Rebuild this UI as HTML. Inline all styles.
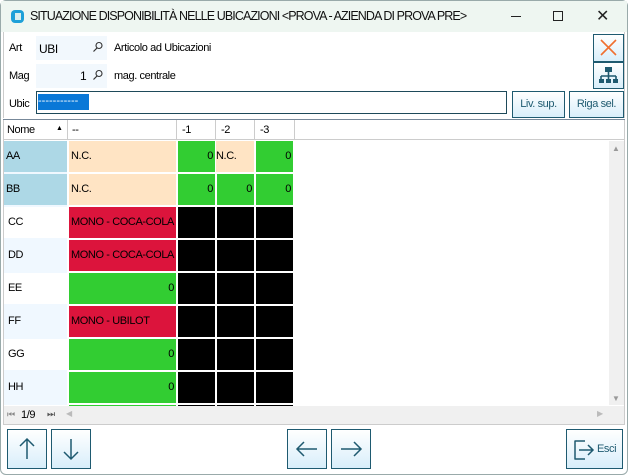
<!DOCTYPE html>
<html><head><meta charset="utf-8"><style>
*{box-sizing:border-box;margin:0;padding:0}
body{width:628px;height:475px;background:#fff;font-family:"Liberation Sans",sans-serif;font-size:11px;letter-spacing:-0.4px;color:#000;position:relative;overflow:hidden}
.a{position:absolute}
.btn{position:absolute;border:1px solid #1e5a70;background:linear-gradient(#fff,#d8eefa);}
.c{position:absolute;height:31px;line-height:31px;font-size:11px;padding:0 2px;white-space:nowrap;overflow:hidden}
.bl{background:#000}.gr{background:#32cd32;text-align:right}.pe{background:#ffe4c4}.rd{background:#dc143c}.lb{background:#add8e6}
.mg{position:absolute;width:12px;height:12px}
</style></head><body>
<div class="a" style="left:0;top:0;width:628px;height:475px;border:1px solid #9aa;border-radius:6px"></div>
<div class="a" style="left:1px;top:1px;width:626px;height:31px;background:#eef6f1"></div>
<svg class="a" style="left:10px;top:9px" width="15" height="15"><rect x="1" y="1" width="13" height="13" rx="4" fill="#1ea0d8"/><path d="M5 4h6v7h-6z" fill="#eef6f1" opacity=".9"/></svg>
<div class="a" style="left:30px;top:9px;font-size:12.5px;letter-spacing:-0.9px;color:#111">SITUAZIONE DISPONIBILITÀ NELLE UBICAZIONI &lt;PROVA - AZIENDA DI PROVA PRE&gt;</div>
<div class="a" style="left:511px;top:16px;width:10px;height:1px;background:#222"></div>
<div class="a" style="left:553px;top:11px;width:10px;height:10px;border:1px solid #222"></div>
<div class="a" style="left:596px;top:6px;font-size:16px;color:#222">✕</div>
<div class="a" style="left:3px;top:32px;width:622px;height:86px;background:#fff;border-left:1px solid #ccc;border-right:1px solid #ccc"></div>
<div class="a" style="left:9px;top:42px">Art</div>
<div class="a" style="left:36px;top:36px;width:71px;height:24px;background:#f2f8fd"></div>
<div class="a" style="left:39px;top:42px;font-size:12px">UBI</div>
<svg class="mg" style="left:92px;top:41px"><circle cx="7" cy="4.5" r="3" fill="none" stroke="#333" stroke-width="1.1"/><path d="M5 7l-3.5 3.5" stroke="#333" stroke-width="1.2"/></svg>
<div class="a" style="left:95px;top:42px"></div>
<div class="a" style="left:95px;top:42px;left:95px"></div>
<div class="a" style="left:95px;top:42px;left:95px"></div>
<div class="a" style="left:95px;top:42px"></div>
<div class="a" style="left:95px;top:42px"></div>
<div class="a" style="left:95px;top:42px"></div>
<div class="a" style="left:95px;top:42px"></div>
<div class="a" style="left:95px;top:42px"></div>
<div class="a" style="left:95px;top:42px"></div>
<div class="a" style="left:95px;top:42px"></div>
<div class="a" style="left:95px;top:42px"></div>
<div class="a" style="left:95px;top:42px"></div>
<div class="a" style="left:95px;top:42px"></div>
<div class="a" style="left:95px;top:42px"></div>
<div class="a" style="left:95px;top:42px"></div>
<div class="a" style="left:95px;top:42px"></div>
<div class="a" style="left:95px;top:42px"></div>
<div class="a" style="left:95px;top:42px"></div>
<div class="a" style="left:95px;top:42px"></div>
<div class="a" style="left:95px;top:42px"></div>
<div class="a" style="left:95px;top:42px"></div>
<div class="a" style="left:95px;top:42px"></div>
<div class="a" style="left:95px;top:42px"></div>
<div class="a" style="left:95px;top:42px"></div>
<div class="a" style="left:95px;top:42px"></div>
<div class="a" style="left:95px;top:42px"></div>
<div class="a" style="left:95px;top:42px"></div>
<div class="a" style="left:95px;top:42px"></div>
<div class="a" style="left:95px;top:42px"></div>
<div class="a" style="left:95px;top:42px"></div>
<div class="a" style="left:95px;top:42px"></div>
<div class="a" style="left:95px;top:42px"></div>
<div class="a" style="left:95px;top:42px"></div>
<div class="a" style="left:95px;top:42px"></div>
<div class="a" style="left:95px;top:42px"></div>
<div class="a" style="left:95px;top:42px"></div>
<div class="a" style="left:95px;top:42px"></div>
<div class="a" style="left:95px;top:42px"></div>
<div class="a" style="left:95px;top:42px"></div>
<div class="a" style="left:95px;top:42px"></div>
<div class="a" style="left:95px;top:42px"></div>
<div class="a" style="left:95px;top:42px"></div>
<div class="a" style="left:95px;top:42px"></div>
<div class="a" style="left:95px;top:42px"></div>
<div class="a" style="left:95px;top:42px"></div>
<div class="a" style="left:95px;top:42px"></div>
<div class="a" style="left:95px;top:42px"></div>
<div class="a" style="left:95px;top:42px"></div>
<div class="a" style="left:95px;top:42px"></div>
<div class="a" style="left:95px;top:42px"></div>
<div class="a" style="left:95px;top:42px"></div>
<div class="a" style="left:95px;top:42px"></div>
<div class="a" style="left:95px;top:42px"></div>
<div class="a" style="left:95px;top:42px"></div>
<div class="a" style="left:95px;top:42px"></div>
<div class="a" style="left:95px;top:42px"></div>
<div class="a" style="left:95px;top:42px"></div>
<div class="a" style="left:95px;top:42px"></div>
<div class="a" style="left:95px;top:42px"></div>
<div class="a" style="left:95px;top:42px"></div>
<div class="a" style="left:95px;top:42px"></div>
<div class="a" style="left:95px;top:42px"></div>
<div class="a" style="left:95px;top:42px"></div>
<div class="a" style="left:95px;top:42px"></div>
<div class="a" style="left:95px;top:42px"></div>
<div class="a" style="left:95px;top:42px"></div>
<div class="a" style="left:95px;top:42px"></div>
<div class="a" style="left:95px;top:42px"></div>
<div class="a" style="left:95px;top:42px"></div>
<div class="a" style="left:95px;top:42px"></div>
<div class="a" style="left:95px;top:42px"></div>
<div class="a" style="left:95px;top:42px"></div>
<div class="a" style="left:95px;top:42px"></div>
<div class="a" style="left:95px;top:42px"></div>
<div class="a" style="left:95px;top:42px"></div>
<div class="a" style="left:95px;top:42px"></div>
<div class="a" style="left:95px;top:42px"></div>
<div class="a" style="left:95px;top:42px"></div>
<div class="a" style="left:95px;top:42px"></div>
<div class="a" style="left:95px;top:42px"></div>
<div class="a" style="left:95px;top:42px"></div>
<div class="a" style="left:95px;top:42px"></div>
<div class="a" style="left:95px;top:42px"></div>
<div class="a" style="left:95px;top:42px"></div>
<div class="a" style="left:95px;top:42px"></div>
<div class="a" style="left:95px;top:42px"></div>
<div class="a" style="left:114px;top:42px">Articolo ad Ubicazioni</div>
<div class="a" style="left:9px;top:70px">Mag</div>
<div class="a" style="left:36px;top:64px;width:71px;height:24px;background:#f2f8fd"></div>
<div class="a" style="left:80px;top:69px;font-size:12px">1</div>
<svg class="mg" style="left:92px;top:69px"><circle cx="7" cy="4.5" r="3" fill="none" stroke="#333" stroke-width="1.1"/><path d="M5 7l-3.5 3.5" stroke="#333" stroke-width="1.2"/></svg>
<div class="a" style="left:114px;top:70px">mag. centrale</div>
<div class="a" style="left:9px;top:98px">Ubic</div>
<div class="a" style="left:36px;top:91px;width:471px;height:23px;border:1px solid #1e4a5a"></div>
<div class="a" style="left:38px;top:94px;width:51px;height:16px;background:#0a78d7;color:#fff;line-height:14px;font-size:11px;letter-spacing:0;overflow:hidden">-----------</div>
<div class="btn" style="left:512px;top:91px;width:53px;height:27px;color:#1e5a70;text-align:center;line-height:25px">Liv. sup.</div>
<div class="btn" style="left:569px;top:91px;width:55px;height:27px;color:#1e5a70;text-align:center;line-height:25px">Riga sel.</div>
<div class="btn" style="left:593px;top:34px;width:31px;height:28px"><svg width="29" height="26"><path d="M7 5l15 15M22 5L7 20" stroke="#f07030" stroke-width="1.6"/></svg></div>
<div class="btn" style="left:593px;top:62px;width:31px;height:27px"><svg width="29" height="25"><rect x="11" y="4" width="7" height="5" fill="#1e5a70"/><path d="M14.5 9v4M7 13h15M7 13v4M14.5 13v4M22 13v4" stroke="#1e5a70" stroke-width="1.6"/><rect x="5" y="16" width="5" height="4" fill="#1e5a70"/><rect x="12" y="16" width="5" height="4" fill="#1e5a70"/><rect x="19" y="16" width="5" height="4" fill="#1e5a70"/></svg></div>
<!-- grid -->
<div class="a" style="left:3px;top:119px;width:622px;height:1px;background:#789"></div>
<div class="a" style="left:3px;top:120px;width:291px;height:20px;background:#fff;border-bottom:1px solid #ccc"></div>
<div class="a" style="left:3px;top:120px;width:622px;height:305px;border-left:1px solid #ccc;border-right:1px solid #ccc"></div>
<div class="a" style="left:294px;top:120px;width:330px;height:20px;border-bottom:1px solid #ccc;border-left:1px solid #ccc"></div>
<div class="a" style="left:7px;top:124px">Nome</div><div class="a" style="left:56px;top:125px;font-size:7px">▲</div>
<div class="a" style="left:67px;top:120px;width:1px;height:20px;background:#ccc"></div>
<div class="a" style="left:72px;top:124px">--</div>
<div class="a" style="left:176px;top:120px;width:1px;height:20px;background:#ccc"></div>
<div class="a" style="left:182px;top:124px">-1</div>
<div class="a" style="left:215px;top:120px;width:1px;height:20px;background:#ccc"></div>
<div class="a" style="left:221px;top:124px">-2</div>
<div class="a" style="left:254px;top:120px;width:1px;height:20px;background:#ccc"></div>
<div class="a" style="left:260px;top:124px">-3</div>
<div class="a" style="left:4px;top:141px;width:63px;height:264px;background:#f0f8ff"></div>
<!-- rows -->
<div class="c lb" style="left:4px;top:141px;width:63px">AA</div><div class="c pe" style="left:69px;top:141px;width:107px">N.C.</div><div class="c gr" style="left:178px;top:141px;width:37px">0</div><div class="c pe" style="left:216px;top:141px;width:38px;padding:0">N.C.</div><div class="c gr" style="left:256px;top:141px;width:37px">0</div>
<div class="c lb" style="left:4px;top:174px;width:63px">BB</div><div class="c pe" style="left:69px;top:174px;width:107px">N.C.</div><div class="c gr" style="left:178px;top:174px;width:37px">0</div><div class="c gr" style="left:217px;top:174px;width:37px">0</div><div class="c gr" style="left:256px;top:174px;width:37px">0</div>
<div class="c" style="left:4px;top:207px;width:63px;background:#fff;padding-left:4px">CC</div><div class="c rd" style="left:69px;top:207px;width:107px">MONO - COCA-COLA</div><div class="c bl" style="left:178px;top:207px;width:37px"></div><div class="c bl" style="left:217px;top:207px;width:37px"></div><div class="c bl" style="left:256px;top:207px;width:37px"></div>
<div class="c" style="left:4px;top:240px;width:63px;padding-left:4px">DD</div><div class="c rd" style="left:69px;top:240px;width:107px">MONO - COCA-COLA</div><div class="c bl" style="left:178px;top:240px;width:37px"></div><div class="c bl" style="left:217px;top:240px;width:37px"></div><div class="c bl" style="left:256px;top:240px;width:37px"></div>
<div class="c" style="left:4px;top:273px;width:63px;background:#fff;padding-left:4px">EE</div><div class="c gr" style="left:69px;top:273px;width:107px">0</div><div class="c bl" style="left:178px;top:273px;width:37px"></div><div class="c bl" style="left:217px;top:273px;width:37px"></div><div class="c bl" style="left:256px;top:273px;width:37px"></div>
<div class="c" style="left:4px;top:306px;width:63px;padding-left:4px">FF</div><div class="c rd" style="left:69px;top:306px;width:107px">MONO - UBILOT</div><div class="c bl" style="left:178px;top:306px;width:37px"></div><div class="c bl" style="left:217px;top:306px;width:37px"></div><div class="c bl" style="left:256px;top:306px;width:37px"></div>
<div class="c" style="left:4px;top:339px;width:63px;background:#fff;padding-left:4px">GG</div><div class="c gr" style="left:69px;top:339px;width:107px">0</div><div class="c bl" style="left:178px;top:339px;width:37px"></div><div class="c bl" style="left:217px;top:339px;width:37px"></div><div class="c bl" style="left:256px;top:339px;width:37px"></div>
<div class="c" style="left:4px;top:372px;width:63px;padding-left:4px">HH</div><div class="c gr" style="left:69px;top:372px;width:107px">0</div><div class="c bl" style="left:178px;top:372px;width:37px"></div><div class="c bl" style="left:217px;top:372px;width:37px"></div><div class="c bl" style="left:256px;top:372px;width:37px"></div>
<div class="a" style="left:69px;top:405px;width:107px;height:2px;background:#32cd32"></div>
<div class="a" style="left:178px;top:405px;width:37px;height:2px;background:#000"></div><div class="a" style="left:217px;top:405px;width:37px;height:2px;background:#000"></div><div class="a" style="left:256px;top:405px;width:37px;height:2px;background:#000"></div>
<div class="a" style="left:609px;top:141px;width:15px;height:264px;background:#f0f0f0"></div>
<div class="a" style="left:612px;top:144px;font-size:8px;color:#999">▲</div>
<div class="a" style="left:612px;top:394px;font-size:8px;color:#999">▼</div>
<div class="a" style="left:4px;top:406px;width:620px;height:18px;background:#f0f0f0"></div>
<div class="a" style="left:7px;top:409px;font-size:9px;color:#888">⏮</div>
<div class="a" style="left:21px;top:409px;font-size:11px">1/9</div>
<div class="a" style="left:47px;top:409px;font-size:9px;color:#555">⏭</div>
<div class="a" style="left:66px;top:409px;font-size:8px;color:#bbb">◀</div>
<div class="a" style="left:597px;top:409px;font-size:8px;color:#bbb">▶</div>
<div class="a" style="left:3px;top:424px;width:622px;height:1px;background:#ccc"></div>
<!-- bottom buttons -->
<div class="btn" style="left:7px;top:429px;width:40px;height:40px"><svg width="38" height="38"><path d="M19 29V9M12 16l7-7 7 7" stroke="#1e5a70" stroke-width="1.5" fill="none"/></svg></div>
<div class="btn" style="left:51px;top:429px;width:40px;height:40px"><svg width="38" height="38"><path d="M19 9v20M12 22l7 7 7-7" stroke="#1e5a70" stroke-width="1.5" fill="none"/></svg></div>
<div class="btn" style="left:287px;top:429px;width:40px;height:40px"><svg width="38" height="38"><path d="M29 19H9M16 12l-7 7 7 7" stroke="#1e5a70" stroke-width="1.5" fill="none"/></svg></div>
<div class="btn" style="left:331px;top:429px;width:40px;height:40px"><svg width="38" height="38"><path d="M9 19h20M22 12l7 7-7 7" stroke="#1e5a70" stroke-width="1.5" fill="none"/></svg></div>
<div class="btn" style="left:566px;top:429px;width:57px;height:40px"><svg width="30" height="38"><path d="M18 11H8v18h10" stroke="#1e5a70" stroke-width="1.5" fill="none" stroke-linejoin="round"/><path d="M12 20h14M21 15l5 5-5 5" stroke="#1e5a70" stroke-width="1.5" fill="none"/></svg><span class="a" style="left:30px;top:13px;color:#1e5a70;font-size:11px">Esci</span></div>
</body></html>
